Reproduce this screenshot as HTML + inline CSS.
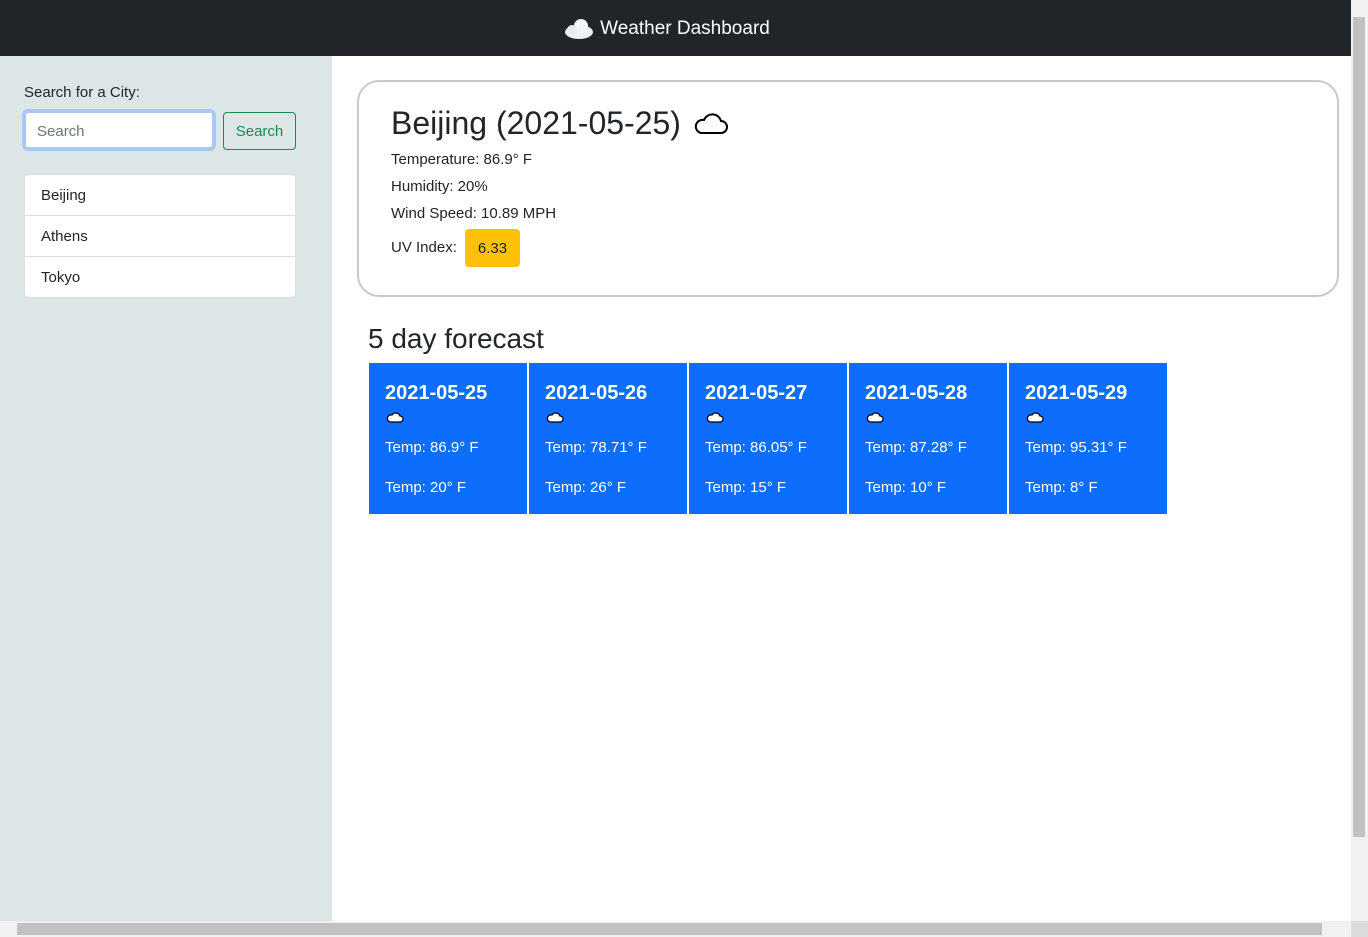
<!DOCTYPE html>
<html><head><meta charset="utf-8"><style>
*{box-sizing:border-box;margin:0;padding:0}
body{width:1368px;height:937px;overflow:hidden;font-family:"Liberation Sans",sans-serif;color:#212529;background:#fff;position:relative}
.hdr{position:absolute;left:0;top:0;width:1351px;height:56px;background:#212529;color:#fff;font-size:19px;display:flex;align-items:center;justify-content:center;gap:5px;padding-top:2px;padding-right:18px}
.side{position:absolute;left:0;top:56px;width:332px;height:865px;background:#dde6e7}
.lbl{position:absolute;left:24px;top:28px;font-size:15px}
.inp{position:absolute;left:22px;top:53px;width:194px;height:42px;border:4px solid #a9c8f1;border-radius:6px;background:#fff}
.inp span{position:absolute;left:11px;top:10px;font-size:15px;color:#6c757d}
.btn{position:absolute;left:223px;top:56px;width:73px;height:38px;border:1px solid #198754;border-radius:4px;color:#198754;font-size:15px;display:flex;align-items:center;justify-content:center}
.list{position:absolute;left:24px;top:118px;width:272px;background:#fff;border:1px solid #ddd;border-radius:4px}
.list div{height:41px;line-height:42px;padding-left:16px;font-size:15px;border-top:1px solid #ddd}
.list div:first-child{border-top:none;height:40px}
.card{position:absolute;left:357px;top:80px;width:982px;height:217px;border:2px solid #c8c8d4;border-radius:22px}
.card h1{position:absolute;left:32px;top:23px;font-size:32px;font-weight:normal;display:flex;align-items:center;gap:12px}
.card p{position:absolute;left:32px;font-size:15px}
.uv{position:absolute;left:106px;top:147px;width:55px;height:38px;background:#ffc107;border-radius:4px;font-size:15px;text-align:center;line-height:40px}
h2{position:absolute;left:368px;top:323px;font-size:28px;font-weight:normal}
.fc{position:absolute;top:363px;width:158px;height:151px;background:#0d6efd;color:#fff}
.fc b{position:absolute;left:16px;top:19px;font-size:20px}
.fc svg{position:absolute;left:17px;top:48px}
.fc .a{position:absolute;left:16px;top:76px;font-size:15px}
.fc .c{position:absolute;left:16px;top:116px;font-size:15px}
.vs{position:absolute;left:1351px;top:0;width:17px;height:921px;background:#f1f1f1}
.vs i{position:absolute;left:2px;top:17px;width:12px;height:820px;background:#c1c1c1}
.hs{position:absolute;left:0;top:921px;width:1351px;height:16px;background:#f1f1f1}
.hs i{position:absolute;left:17px;top:2px;width:1305px;height:12px;background:#c1c1c1}
.cr{position:absolute;left:1351px;top:921px;width:17px;height:16px;background:#dcdcdc}
</style></head><body>
<div class="hdr"><svg width="32" height="24" viewBox="0 0 32 24"><ellipse cx="16" cy="15" rx="14" ry="7" fill="#eef0f4"/><circle cx="18" cy="9" r="7" fill="#f4f5f8"/><circle cx="9" cy="13" r="5" fill="#e8eaef"/></svg><span>Weather Dashboard</span></div>
<div class="side">
<div class="lbl">Search for a City:</div>
<div class="inp"><span>Search</span></div>
<div class="btn">Search</div>
<div class="list"><div>Beijing</div><div>Athens</div><div>Tokyo</div></div>
</div>
<div class="card">
<h1>Beijing (2021-05-25) <svg width="36" height="24" viewBox="0 0 36 24"><path d="M8 21 H28 A6 6 0 0 0 28 9 A9 9 0 0 0 11 8 A6.5 6.5 0 0 0 8 21 Z" fill="none" stroke="#000" stroke-width="2"/></svg></h1>
<p style="top:69px">Temperature: 86.9° F</p>
<p style="top:96px">Humidity: 20%</p>
<p style="top:123px">Wind Speed: 10.89 MPH</p>
<p style="top:157px">UV Index:</p>
<div class="uv">6.33</div>
</div>
<h2>5 day forecast</h2>
<div class="fc" style="left:369px"><b>2021-05-25</b><svg width="18" height="12" viewBox="0 0 18 12"><path d="M4 11 H14 A3 3 0 0 0 14 5 A4.5 4.5 0 0 0 6 4 A3.5 3.5 0 0 0 4 11Z" fill="#fff" stroke="#000" stroke-width="1.3"/></svg><div class="a">Temp: 86.9° F</div><div class="c">Temp: 20° F</div></div>
<div class="fc" style="left:529px"><b>2021-05-26</b><svg width="18" height="12" viewBox="0 0 18 12"><path d="M4 11 H14 A3 3 0 0 0 14 5 A4.5 4.5 0 0 0 6 4 A3.5 3.5 0 0 0 4 11Z" fill="#fff" stroke="#000" stroke-width="1.3"/></svg><div class="a">Temp: 78.71° F</div><div class="c">Temp: 26° F</div></div>
<div class="fc" style="left:689px"><b>2021-05-27</b><svg width="18" height="12" viewBox="0 0 18 12"><path d="M4 11 H14 A3 3 0 0 0 14 5 A4.5 4.5 0 0 0 6 4 A3.5 3.5 0 0 0 4 11Z" fill="#fff" stroke="#000" stroke-width="1.3"/></svg><div class="a">Temp: 86.05° F</div><div class="c">Temp: 15° F</div></div>
<div class="fc" style="left:849px"><b>2021-05-28</b><svg width="18" height="12" viewBox="0 0 18 12"><path d="M4 11 H14 A3 3 0 0 0 14 5 A4.5 4.5 0 0 0 6 4 A3.5 3.5 0 0 0 4 11Z" fill="#fff" stroke="#000" stroke-width="1.3"/></svg><div class="a">Temp: 87.28° F</div><div class="c">Temp: 10° F</div></div>
<div class="fc" style="left:1009px"><b>2021-05-29</b><svg width="18" height="12" viewBox="0 0 18 12"><path d="M4 11 H14 A3 3 0 0 0 14 5 A4.5 4.5 0 0 0 6 4 A3.5 3.5 0 0 0 4 11Z" fill="#fff" stroke="#000" stroke-width="1.3"/></svg><div class="a">Temp: 95.31° F</div><div class="c">Temp: 8° F</div></div>
<div class="vs"><i></i></div>
<div class="hs"><i></i></div>
<div class="cr"></div>
</body></html>
